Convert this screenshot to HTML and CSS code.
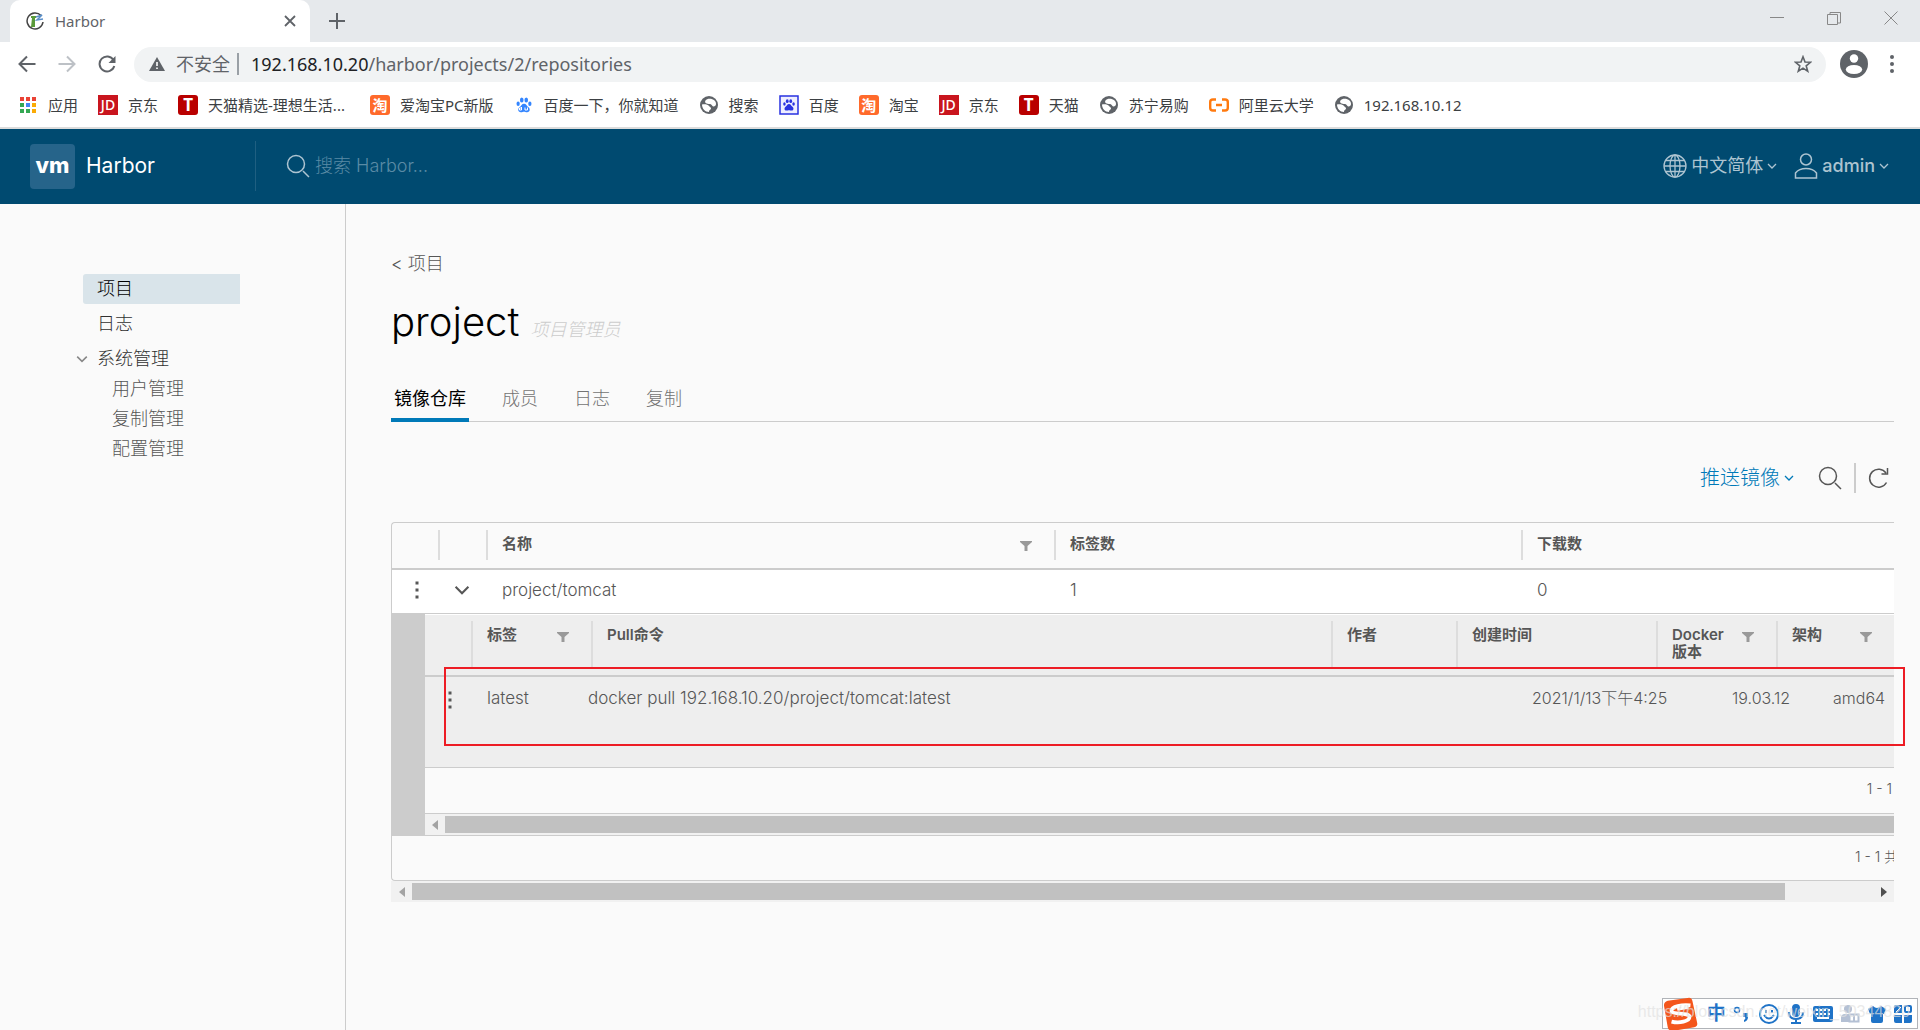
FILE: index.html
```html
<!DOCTYPE html>
<html lang="zh-CN">
<head>
<meta charset="utf-8">
<title>Harbor</title>
<link rel="stylesheet" href="styles.css">
</head>
<body>
<svg class="defs" aria-hidden="true">
  <symbol id="world" viewBox="0 0 20 20"><circle cx="10" cy="10" r="9" fill="#5f6368"/><path d="M15.500 5.500C13 3 8 3 6.500 5.500S8 9 10.500 9s2.500 2.500 4 2.500 2.500-1 2.500-2.500-.5-2.500-1.500-3.500zM3 9.500c3-.5 6 0 7 1.500s2 1 2 2.500-2 1-2 3.500C6 17 3 13.500 3 9.500z" fill="#fff"/></symbol>
  <symbol id="paw" viewBox="0 0 20 20"><ellipse cx="7.500" cy="4.500" rx="2" ry="2.800"/><ellipse cx="12.500" cy="4.500" rx="2" ry="2.800"/><ellipse cx="3.500" cy="8.500" rx="1.800" ry="2.500"/><ellipse cx="16.500" cy="8.500" rx="1.800" ry="2.500"/><path d="M10 8.500c2.500 0 3 2.500 5 4s2 5.500-1.500 5.500c-2 0-2-.5-3.500-.5s-1.500.5-3.500.5C3 18 3 14 5 12.500s2.500-4 5-4z"/></symbol>
  <symbol id="caret" viewBox="0 0 10 10"><path d="M1 3l4 4 4-4" fill="none" stroke="currentColor" stroke-width="1.300"/></symbol>
  <symbol id="funnel" viewBox="0 0 12 12"><path d="M0 1h12v1L7.500 6v5h-3V6L0 2z" fill="#999"/></symbol>
  <symbol id="dots" viewBox="0 0 4 18"><path d="M.5 0.500h3v3h-3zM.5 7.500h3v3h-3zM.5 14.500h3v3h-3z" fill="#565656"/></symbol>
  <symbol id="lens" viewBox="0 0 24 24"><circle cx="10" cy="10" r="8.500" fill="none" stroke="currentColor" stroke-width="1.500"/><path d="M17 17l6 6" stroke="currentColor" stroke-width="1.500"/></symbol>
</svg>

<div class="browser">
  <div class="tabstrip">
    <div class="tab">
      <svg width="18" height="20" viewBox="0 0 18 20"><path d="M15 4.500A8 8 0 1 0 17 11" fill="none" stroke="#444" stroke-width="1.500"/><path d="M6 7h3v9H5zM5 5h5v2H5z" fill="#5a9a3a"/><path d="M10 6l6-2-5 5 6-1" fill="none" stroke="#5b8fc9" stroke-width="1.500"/></svg>
      <span class="tab-title">Harbor</span>
      <button class="plain" aria-label="关闭标签页"><svg width="12" height="12" viewBox="0 0 12 12"><path d="M1 1l10 10M11 1L1 11" stroke="#5f6368" stroke-width="1.800"/></svg></button>
    </div>
    <button class="plain new-tab" aria-label="新标签页"><svg width="16" height="16" viewBox="0 0 16 16"><path d="M8 0v16M0 8h16" stroke="#5f6368" stroke-width="2"/></svg></button>
    <div class="window-controls">
      <button class="plain" aria-label="最小化"><svg width="14" height="14" viewBox="0 0 14 14"><path d="M0 6.500h14" stroke="#888"/></svg></button>
      <button class="plain" aria-label="还原"><svg width="14" height="14" viewBox="0 0 14 14"><path d="M.5 3.500h10v10H.5zM3 3V1.500h10.500V12H11" fill="none" stroke="#888"/></svg></button>
      <button class="plain" aria-label="关闭"><svg width="14" height="14" viewBox="0 0 14 14"><path d="M.5.5l13 13M13.500.5L.5 13.500" stroke="#888"/></svg></button>
    </div>
  </div>
  <div class="toolbar">
    <button class="plain" aria-label="后退"><svg width="18" height="18" viewBox="0 0 18 18"><path d="M17.500 9H2M9 1.500L1.500 9 9 16.500" fill="none" stroke="#5f6368" stroke-width="2"/></svg></button>
    <button class="plain" aria-label="前进"><svg width="18" height="18" viewBox="0 0 18 18"><path d="M.5 9H16M9 1.500L16.500 9 9 16.500" fill="none" stroke="#bdc1c6" stroke-width="2"/></svg></button>
    <button class="plain" aria-label="刷新"><svg width="18" height="18" viewBox="0 0 18 18"><path d="M15.500 5A7.500 7.500 0 1 0 16.300 11" fill="none" stroke="#5f6368" stroke-width="2"/><path d="M17.500 1v7h-7z" fill="#5f6368"/></svg></button>
    <div class="omnibox">
      <svg width="16" height="14" viewBox="0 0 16 14"><path d="M8 0l8 14H0z" fill="#5f6368"/><path d="M7.200 5h1.600v4H7.200zM7.200 10.500h1.600V12H7.200z" fill="#fff"/></svg>
      <span class="insecure">不安全</span>
      <span class="url"><b>192.168.10.20</b>/harbor/projects/2/repositories</span>
      <svg width="18" height="18" viewBox="0 0 18 18"><path d="M9 1.800l2 5.200 5.500.3-4.300 3.500 1.500 5.400L9 13.100l-4.700 3.100 1.500-5.400L1.500 7.300 7 7z" fill="none" stroke="#5f6368" stroke-width="1.600"/></svg>
    </div>
    <button class="plain" aria-label="用户"><svg width="28" height="28" viewBox="0 0 28 28"><circle cx="14" cy="14" r="14" fill="#5f6368"/><circle cx="14" cy="8.500" r="4.200" fill="#fff"/><ellipse cx="14" cy="19.500" rx="8.200" ry="4.500" fill="#fff"/></svg></button>
    <button class="plain" aria-label="菜单"><svg width="4" height="18" viewBox="0 0 4 18"><g fill="#5f6368"><circle cx="2" cy="2" r="2"/><circle cx="2" cy="9" r="2"/><circle cx="2" cy="16" r="2"/></g></svg></button>
  </div>
  <nav class="bookmarks">
    <a href="#"><svg width="20" height="20" viewBox="0 0 20 20"><path d="M2 2h4v4H2zM8 2h4v4H8zM14 2h4v4h-4z" fill="#ea4335"/><path d="M2 8h4v4H2zM2 14h4v4H2zM8 14h4v4H8z" fill="#34a853"/><path d="M8 8h4v4H8z" fill="#4285f4"/><path d="M14 8h4v4h-4zM14 14h4v4h-4z" fill="#fbab05"/></svg>应用</a>
    <a href="#"><i class="fav jd">JD</i>京东</a>
    <a href="#" class="long"><i class="fav tm">T</i>天猫精选-理想生活...</a>
    <a href="#"><i class="fav tb">淘</i>爱淘宝PC新版</a>
    <a href="#"><svg width="20" height="20" viewBox="0 0 20 20"><use href="#paw" x="1" y="1" width="18" height="18" fill="#3385ff"/><path d="M7.500 12v3h-2v-2h2M11 12.500v2.500h2.500v-2.500" fill="none" stroke="#fff"/></svg>百度一下，你就知道</a>
    <a href="#"><svg width="20" height="20"><use href="#world"/></svg>搜索</a>
    <a href="#"><svg width="20" height="20" viewBox="0 0 20 20"><path d="M1 1h18v18H1z" fill="#eef" stroke="#2932e1" stroke-width="1.500"/><use href="#paw" x="3" y="3" width="14" height="14" fill="#2932e1"/></svg>百度</a>
    <a href="#"><i class="fav tb">淘</i>淘宝</a>
    <a href="#"><i class="fav jd">JD</i>京东</a>
    <a href="#"><i class="fav tm">T</i>天猫</a>
    <a href="#"><svg width="20" height="20"><use href="#world"/></svg>苏宁易购</a>
    <a href="#"><svg width="20" height="20" viewBox="0 0 20 20"><path d="M7 4.500H4Q1.200 4.500 1.200 7v6q0 2.500 2.800 2.500h3M13 4.500h3q2.800 0 2.800 2.500v6q0 2.500-2.800 2.500h-3M7 10h6" fill="none" stroke="#ff7a0f" stroke-width="2.400"/></svg>阿里云大学</a>
    <a href="#"><svg width="20" height="20"><use href="#world"/></svg>192.168.10.12</a>
  </nav>
</div>

<header class="app-header">
  <div class="brand"><span class="vm">vm</span><span>Harbor</span></div>
  <label class="search"><svg width="24" height="24"><use href="#lens"/></svg><input type="text" placeholder="搜索 Harbor..." aria-label="搜索 Harbor"></label>
  <button class="plain menu"><svg width="24" height="24" viewBox="0 0 24 24" fill="none" stroke="currentColor" stroke-width="1.300"><circle cx="12" cy="12" r="11"/><ellipse cx="12" cy="12" rx="5" ry="11"/><path d="M12 1v22M1 12h22M3 6.500h18M3 17.500h18"/></svg><span>中文简体</span><svg width="10" height="10"><use href="#caret"/></svg></button>
  <button class="plain menu"><svg width="24" height="26" viewBox="0 0 24 26" fill="none" stroke="currentColor" stroke-width="1.500"><circle cx="12" cy="6.500" r="5.500"/><path d="M1.500 25v-5Q5 15.500 12 15.500T22.500 20v5z"/></svg><span class="user">admin</span><svg width="10" height="10"><use href="#caret"/></svg></button>
</header>

<div class="app">
  <nav class="sidebar">
    <a href="#" class="active">项目</a>
    <a href="#">日志</a>
    <div class="group"><svg width="12" height="12" viewBox="0 0 10 10"><use href="#caret"/></svg><span>系统管理</span></div>
    <a href="#" class="sub">用户管理</a>
    <a href="#" class="sub">复制管理</a>
    <a href="#" class="sub">配置管理</a>
  </nav>
  <main class="content">
    <a href="#" class="back">&lt; 项目</a>
    <h1>project <em>项目管理员</em></h1>
    <div class="tabs">
      <button class="plain on">镜像仓库</button>
      <button class="plain">成员</button>
      <button class="plain">日志</button>
      <button class="plain">复制</button>
    </div>
    <div class="actions">
      <button class="plain push">推送镜像<svg width="10" height="10"><use href="#caret"/></svg></button>
      <button class="plain" aria-label="搜索"><svg width="24" height="24"><use href="#lens"/></svg></button>
      <span class="bar"></span>
      <button class="plain" aria-label="刷新"><svg width="22" height="22" viewBox="0 0 22 22" fill="none" stroke="currentColor" stroke-width="1.500"><path d="M18.500 15.500A9 9 0 1 1 18 6M19.500 1v6h-6"/></svg></button>
    </div>

    <table class="grid outer">
      <thead><tr>
        <th></th><th></th>
        <th>名称<svg width="12" height="12"><use href="#funnel"/></svg></th>
        <th>标签数</th><th>下载数</th>
      </tr></thead>
      <tbody>
        <tr class="repo">
          <td><svg width="4" height="18"><use href="#dots"/></svg></td>
          <td><svg width="16" height="16" viewBox="0 0 10 10"><use href="#caret"/></svg></td>
          <td>project/tomcat</td><td>1</td><td>0</td>
        </tr>
        <tr class="detail"><td colspan="5">
          <table class="grid inner">
            <thead><tr>
              <th></th>
              <th>标签<svg width="12" height="12"><use href="#funnel"/></svg></th>
              <th>Pull命令</th><th>作者</th><th>创建时间</th>
              <th><span>Docker<br>版本</span><svg width="12" height="12"><use href="#funnel"/></svg></th>
              <th>架构<svg width="12" height="12"><use href="#funnel"/></svg></th>
            </tr></thead>
            <tbody><tr>
              <td><svg width="4" height="18"><use href="#dots"/></svg></td>
              <td>latest</td>
              <td>docker pull 192.168.10.20/project/tomcat:latest</td>
              <td>2021/1/13下午4:25</td><td>19.03.12</td><td>amd64</td>
            </tr></tbody>
          </table>
          <div class="pager"><span>1 - 1</span></div>
          <div class="scroll"><svg width="6" height="10" viewBox="0 0 6 10"><path d="M6 0v10L0 5z" fill="#a3a3a3"/></svg><div class="thumb"></div></div>
        </td></tr>
      </tbody>
    </table>
    <div class="pager last"><span>1 - 1 共</span></div>
    <div class="scroll wide"><svg width="6" height="10" viewBox="0 0 6 10"><path d="M6 0v10L0 5z" fill="#a3a3a3"/></svg><div class="thumb"></div><svg width="6" height="10" viewBox="0 0 6 10"><path d="M0 0v10l6-5z" fill="#505050"/></svg></div>
  </main>
</div>

<div class="ime">
  <svg width="36" height="36" viewBox="0 0 38 36"><path d="M1 9Q1 5 5 4L26 1q4-1 5 3l5 23q1 4-3 5l-23 4q-4 0-5-4z" fill="#f4561c"/><path d="M29 9C20 8 9 10 9 14.500S28 16 28 21s-11 7-19 5" fill="none" stroke="#fff" stroke-width="4"/><path d="M15 13l12-2" stroke="#fff" stroke-width="3"/></svg>
  <span class="zh">中</span>
  <svg width="18" height="20" viewBox="0 0 18 20"><circle cx="4" cy="6" r="2.500" fill="none" stroke="#1f73c7" stroke-width="1.500"/><path d="M10 9h5v4q0 4-4 5v-2q2-1 1-3h-2z" fill="#1f73c7"/></svg>
  <svg width="20" height="20" viewBox="0 0 20 20" fill="none" stroke="#1f73c7" stroke-width="2"><circle cx="10" cy="10" r="9"/><path d="M7 6v3M13 6v3M5 11q5 7 10 0"/></svg>
  <svg width="18" height="20" viewBox="0 0 18 20" fill="none" stroke="#1f73c7" stroke-width="2"><rect x="6" y="1" width="6" height="11" rx="3" fill="#1f73c7"/><path d="M2 8q0 7 7 7t7-7M9 15v4M4 19h10"/></svg>
  <svg width="20" height="16" viewBox="0 0 20 16"><rect width="20" height="16" rx="2" fill="#1f73c7"/><path d="M3 4h2m2 0h2m2 0h2m2 0h2M3 8h2m2 0h2m2 0h2m2 0h2M4 12h12" stroke="#fff" stroke-width="2"/></svg>
  <svg width="20" height="20" viewBox="0 0 20 20"><circle cx="8" cy="5" r="4" fill="#b4c0d4"/><path d="M1 18v-4q0-4 4-4h6v8z" fill="#b4c0d4"/><path d="M9.500 10.500h9v7h-9zM14 10v8" fill="#fff" stroke="#b4c0d4" stroke-width="2"/></svg>
  <svg width="18" height="20" viewBox="0 0 18 20"><path d="M5 2q4 4 8 0l5 3-2 5h-1v7q0 2-2 2H5q-2 0-2-2v-7H2L0 5z" fill="#1f73c7"/></svg>
  <svg width="18" height="18" viewBox="0 0 18 18"><path d="M0 2q0-2 2-2h6v8H0zM0 10h8v8H2q-2 0-2-2zM10 10h8v6q0 2-2 2h-6z" fill="#1f73c7"/><rect x="11" y="1" width="6" height="6" rx="1" fill="none" stroke="#1f73c7" stroke-width="2"/><path d="M2 7l5-5" stroke="#fff"/></svg>
</div>
<div class="watermark">https://blog.csdn.net/weixin_50344820</div>
</body>
</html>
```
FILE: styles.css
```css
* { box-sizing: border-box; }
body {
  margin: 0;
  min-height: 100vh;
  display: flex;
  flex-direction: column;
  background: #fafafa;
  color: #565656;
  font-family: Inter, "Noto Sans CJK SC", sans-serif;
  font-size: 16px;
  font-weight: 300;
  line-height: 24px;
}
a { color: inherit; text-decoration: none; }
svg { display: block; flex: none; }
.defs { position: absolute; width: 0; height: 0; }
.plain {
  border: 0;
  padding: 0;
  background: none;
  color: inherit;
  font: inherit;
  display: flex;
  align-items: center;
}

/* Browser window */
.browser {
  background: #fff;
  border-bottom: 2px solid #dcdcdc;
  font-family: "Noto Sans", "Noto Sans CJK SC", sans-serif;
  font-weight: 400;
}
.tabstrip {
  display: flex;
  align-items: center;
  height: 42px;
  padding: 0 22px 0 10px;
  background: #e6e9ec;
}
.tab {
  display: flex;
  align-items: center;
  align-self: stretch;
  gap: 11px;
  width: 300px;
  padding: 0 14px 0 16px;
  border-radius: 10px 10px 0 0;
  background: #fff;
}
.tab-title { flex: 1; font-size: 15px; color: #5f6368; }
.new-tab { margin-left: 19px; }
.window-controls { display: flex; gap: 43px; margin: 0 0 6px auto; }
.toolbar {
  display: flex;
  align-items: center;
  gap: 22px;
  height: 44px;
  padding: 0 26px 0 18px;
}
.omnibox {
  flex: 1;
  display: flex;
  align-items: center;
  height: 35px;
  margin: 0 -8px 0 -4px;
  padding: 0 14px 0 15px;
  border-radius: 18px;
  background: #f1f3f4;
  color: #5f6368;
  font-size: 18px;
}
.insecure { margin: 0 12px 0 11px; padding-right: 7px; border-right: 2px solid #9aa0a6; line-height: 22px; }
.url { flex: 1; }
.url b { font-weight: 400; color: #202124; }
.bookmarks {
  display: flex;
  gap: 20px;
  height: 41px;
  padding: 0 18px 3px;
  color: #3c4043;
  font-size: 15px;
  white-space: nowrap;
}
.bookmarks a { display: flex; align-items: center; gap: 10px; }
.bookmarks .long { width: 172px; }
.fav {
  width: 20px;
  height: 20px;
  border-radius: 3px;
  color: #fff;
  font-style: normal;
  font-weight: 700;
  line-height: 20px;
  text-align: center;
}
.jd { background: #c9151e; border-radius: 0; font-size: 14px; font-weight: 500; }
.tm { background: #b90000; font-size: 17px; }
.tb { background: #ff6a2b; font-size: 15px; }

/* Application header */
.app-header {
  display: flex;
  align-items: center;
  height: 75px;
  padding: 0 31px 1px 30px;
  background: #004a70;
  color: #adc4d1;
}
.brand {
  display: flex;
  align-items: center;
  gap: 11px;
  width: 226px;
  height: 50px;
  border-right: 1px solid #1f5f81;
  color: #fff;
  font-size: 21px;
  font-weight: 400;
}
.vm {
  width: 45px;
  height: 45px;
  border-radius: 4px;
  background: #26648a;
  font-size: 22px;
  font-weight: 800;
  line-height: 42px;
  text-align: center;
}
.search { flex: 1; display: flex; align-items: center; gap: 5px; padding-left: 30px; }
.search input {
  width: 400px;
  border: 0;
  padding: 0;
  background: none;
  color: #fff;
  font: inherit;
  font-size: 18px;
}
.search input::placeholder { color: #5a8ba5; opacity: 1; }
.menu { gap: 4px; margin-left: 17px; font-size: 18px; font-weight: 400; }
.user { font-weight: 500; }

/* Layout */
.app { flex: 1; display: flex; font-size: 18px; }
.sidebar {
  flex: none;
  width: 346px;
  padding: 70px 105px 0 83px;
  border-right: 1px solid #ccc;
}
.sidebar a, .group { display: block; height: 30px; padding-left: 14px; line-height: 30px; }
.sidebar a, .group { margin-bottom: 5px; color: #313131; }
.sidebar .active { border-radius: 3px 0 0 3px; background: #d9e4ea; color: #000; }
.sidebar .group { display: flex; align-items: center; gap: 9px; margin: 0 0 0 -7px; padding: 0; }
.group svg { color: #888; }
.sidebar .sub { margin: 0; padding-left: 29px; color: #565656; }

.content { flex: 1; min-width: 0; padding: 48px 26px 40px 45px; }
.back { display: block; }
h1 { margin: 22px 0 0; color: #000; font-size: 40px; font-weight: 300; line-height: 48px; }
h1 em { color: #ccc; font-size: 18px; }
.tabs { display: flex; gap: 36px; margin-top: 33px; border-bottom: 1px solid #ccc; }
.tabs .plain { height: 35px; margin-bottom: -1px; color: #737373; align-items: flex-start; }
.tabs .on { padding: 0 3px; margin-right: -3px; border-bottom: 4px solid #0079b8; color: #000; font-weight: 400; }
.actions { display: flex; justify-content: flex-end; align-items: center; height: 30px; margin: 41px 4px 29px 0; }
.push { gap: 4px; margin-right: 24px; color: #0079b8; font-size: 20px; }
.bar { width: 2px; height: 30px; margin: 0 12px; background: #ccc; }

/* Data grids */
.grid { display: block; width: 100%; border-spacing: 0; font-size: 17px; }
.grid thead, .grid tbody { display: block; }
.grid th, .grid td { padding: 0; text-align: left; }
.grid th {
  display: flex;
  justify-content: space-between;
  align-items: flex-start;
  padding: 5px 22px 0 14px;
  border-left: 2px solid #ddd;
  font-size: 15px;
  font-weight: 600;
  line-height: 17px;
}
.grid th svg { margin-top: 5px; }
.grid th:first-child { border: 0; }
.outer {
  border: 1px solid #ccc;
  border-width: 1px 0 0 1px;
  border-radius: 4px 0 0 0;
}
.outer > thead > tr, .repo { display: grid; grid-template-columns: 46px 48px 568fr 467fr 373fr; }
.outer > thead > tr { height: 47px; padding: 7px 0 8px; border-bottom: 2px solid #ccc; }
.repo { height: 44px; padding-bottom: 3px; align-items: center; border-bottom: 1px solid #ccc; background: #fff; }
.repo td { padding-left: 16px; }
.repo td:first-child { padding-left: 23px; }
.detail { display: block; }
.detail > td {
  display: block;
  border-left: 33px solid #ccc;
  border-bottom: 1px solid #ccc;
}
.inner { position: relative; padding-top: 1px; background: #fff; }
.inner > thead > tr {
  display: grid;
  grid-template-columns: 46px 120px 1fr 125px 200px 120px 118px;
  height: 62px;
  padding: 6px 0 8px;
  border-bottom: 2px solid #ccc;
  background: #eee;
}
.inner > tbody > tr {
  display: grid;
  grid-template-columns: 62px 101px 1fr 200px 101px 61px;
  height: 91px;
  padding-top: 9px;
  border-bottom: 1px solid #ccc;
  background: #eee;
}
.inner td:first-child { padding: 5px 0 0 23px; }
.inner td:nth-child(n+4) { font-size: 16px; }
/* Highlight frame round the tag row */
.inner::after {
  content: "";
  position: absolute;
  inset: 53px -11px 22px 19px;
  border: 2px solid #ed1c24;
}
.pager { display: flex; justify-content: flex-end; height: 46px; padding: 9px 2px 0; border-bottom: 1px solid #ccc; font-size: 14px; }
.pager.last { height: 45px; padding-right: 0; border-left: 1px solid #ccc; border-radius: 0 0 0 4px; }
.last span { width: 39px; overflow: hidden; white-space: nowrap; }
.scroll { display: flex; align-items: center; gap: 7px; height: 21px; padding-left: 7px; background: #f1f1f1; }
.thumb { flex: 1; height: 17px; background: #c1c1c1; }
.wide { padding: 0 7px 0 8px; }
.wide .thumb { margin-right: 89px; }

/* Input method bar floating over the window corner */
.ime {
  position: absolute;
  right: 2px;
  bottom: 1px;
  display: flex;
  align-items: center;
  justify-content: space-between;
  width: 256px;
  height: 31px;
  padding-right: 5px;
  border: 1px solid #b0b3b8;
  background: #fff;
}
.zh { color: #1f73c7; font-size: 19px; font-weight: 700; }
.watermark {
  position: absolute;
  right: 10px;
  bottom: 6px;
  color: rgba(225, 225, 225, .7);
  font-family: "Liberation Sans", sans-serif;
  font-size: 16px;
  font-weight: 400;
}
```
